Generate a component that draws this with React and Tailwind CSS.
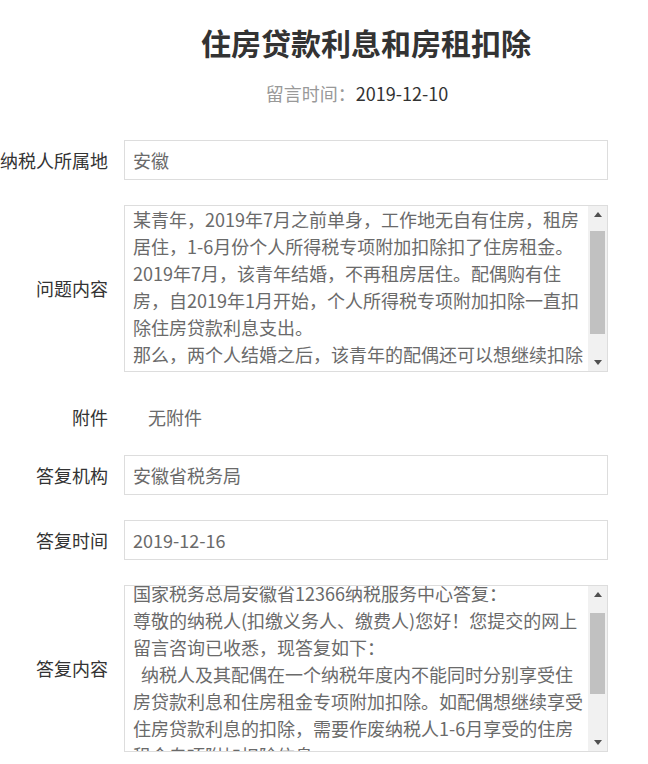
import React from "react";

const font = { fontFamily: '"Noto Sans CJK SC", "Noto Sans", sans-serif' };

const question = [
  "某青年，2019年7月之前单身，工作地无自有住房，租房",
  "居住，1-6月份个人所得税专项附加扣除扣了住房租金。",
  "2019年7月，该青年结婚，不再租房居住。配偶购有住",
  "房，自2019年1月开始，个人所得税专项附加扣除一直扣",
  "除住房贷款利息支出。",
  "那么，两个人结婚之后，该青年的配偶还可以想继续扣除",
  "住房贷款利息支出吗？他们应该怎么办？",
];

const answer = [
  "国家税务总局安徽省12366纳税服务中心答复：",
  "尊敬的纳税人(扣缴义务人、缴费人)您好！您提交的网上",
  "留言咨询已收悉，现答复如下：",
  "\u00a0\u00a0纳税人及其配偶在一个纳税年度内不能同时分别享受住",
  "房贷款利息和住房租金专项附加扣除。如配偶想继续享受",
  "住房贷款利息的扣除，需要作废纳税人1-6月享受的住房",
  "租金专项附加扣除信息。",
];

function Label({ children }) {
  return <div className="w-[108px] shrink-0 text-right text-[18px] text-[#333] whitespace-nowrap">{children}</div>;
}

function Input({ label, value }) {
  return (
    <div className="flex items-center gap-4">
      <Label>{label}</Label>
      <div className="w-[484px] h-[40px] border border-[#ddd] flex items-center pl-2 text-[18px] text-[#6a6a6a]">{value}</div>
    </div>
  );
}

// textarea look-alike with a classic scrollbar
function TextBox({ label, lines, thumbTop, thumbHeight, offset }) {
  return (
    <div className="flex items-center gap-4">
      <Label>{label}</Label>
      <div className="w-[484px] h-[167px] border border-[#ddd] flex">
        <div className="flex-1 overflow-hidden pl-2">
          <div className={offset}>
            {lines.map((l, i) => (
              <div key={i} className="text-[18px] leading-[27px] text-[#6a6a6a] whitespace-nowrap">{l}</div>
            ))}
          </div>
        </div>
        <div className="w-[19px] bg-[#f1f1f1] flex flex-col items-center">
          <div className="h-[17px] flex items-center justify-center">
            <svg width="8" height="5" viewBox="0 0 8 5"><path d="M4 0L8 5H0z" fill="#505050" /></svg>
          </div>
          <div className="flex-1 w-full px-[2px]">
            <div className={`bg-[#c1c1c1] w-full ${thumbTop} ${thumbHeight}`} />
          </div>
          <div className="h-[17px] flex items-center justify-center">
            <svg width="8" height="5" viewBox="0 0 8 5"><path d="M0 0H8L4 5z" fill="#505050" /></svg>
          </div>
        </div>
      </div>
    </div>
  );
}

export default function App() {
  return (
    <div className="w-[648px] min-h-[764px] bg-white pt-[24px]" style={font}>
      <h1 className="ml-[124px] w-[484px] text-center text-[30px] font-bold text-[#333] leading-[36px]">住房贷款利息和房租扣除</h1>
      <div className="ml-[124px] w-[484px] pr-[18px] mt-[20px] text-center text-[18px] leading-[26px]">
        <span className="text-[#999]">留言时间：</span>
        <span className="text-[#333]">2019-12-10</span>
      </div>
      <div className="mt-[34px] flex flex-col">
        <Input label="纳税人所属地" value="安徽" />
        <div className="mt-[25px]">
          <TextBox label="问题内容" lines={question} thumbTop="mt-[8px]" thumbHeight="h-[103px]" offset="mt-0" />
        </div>
        <div className="mt-[25px] h-[40px] flex items-center gap-4">
          <Label>附件</Label>
          <div className="pl-6 text-[18px] text-[#6a6a6a]">无附件</div>
        </div>
        <div className="mt-[18px]">
          <Input label="答复机构" value="安徽省税务局" />
        </div>
        <div className="mt-[25px]">
          <Input label="答复时间" value="2019-12-16" />
        </div>
        <div className="mt-[25px]">
          <TextBox label="答复内容" lines={answer} thumbTop="mt-[10px]" thumbHeight="h-[81px]" offset="-mt-[6px]" />
        </div>
      </div>
    </div>
  );
}
